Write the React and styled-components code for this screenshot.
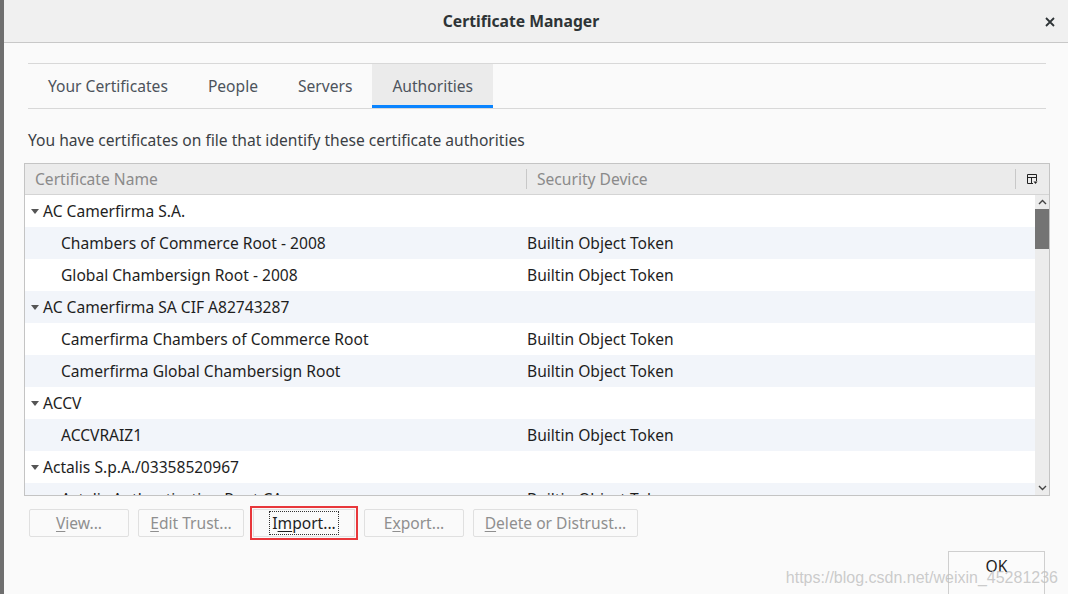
import React from 'react'
import styled, { createGlobalStyle } from 'styled-components';

const Global = createGlobalStyle`
html, body { margin:0; padding:0; height:100%; overflow:hidden; }
body { font-family: "Noto Sans", "Open Sans", sans-serif; }
#root { height:100%; }
`

const Screen = styled.div`
display:flex;
width:1068px;
height:594px;
position:relative;
overflow:hidden;
`

const Strip = styled.div`
width:4px;
flex-shrink:0;
background:#6f6f6f;
`

const Window = styled.div`
flex:1;
display:flex;
flex-direction:column;
background:#fafafa;
overflow:hidden;
`

const TitleBar = styled.div`
height:42px;
flex-shrink:0;
background:#f0f0f0;
border-bottom:1px solid #c8c8c8;
display:flex;
align-items:center;
justify-content:center;
position:relative;
`

const Title = styled.div`
font-size:15.7px;
font-weight:700;
color:#2e3436;
margin-left:-30px;
`

const Close = styled.div`
position:absolute;
right:10px;
top:13px;
width:16px;
height:16px;
`

const Content = styled.div`
display:flex;
flex-direction:column;
flex-shrink:0;
padding:20px 18px 0 20px;
`

const Tabs = styled.div`
display:flex;
margin:0 4px;
height:44px;
border-top:1px solid #d8d8d8;
border-bottom:1px solid #d8d8d8;
`

const Tab = styled.div`
display:flex;
align-items:center;
padding:0 ${p=>p.$pad}px;
font-size:15.6px;
color:#4d535c;
background:${p=>p.$active?'#ebebeb':'transparent'};
box-shadow:${p=>p.$active?'inset 0 -3px 0 #0a84ff':'none'};
`

const Desc = styled.div`
margin:21px 4px 0;
font-size:15.6px;
color:#3b3f45;
height:20px;
line-height:20px;
`

const Tree = styled.div`
margin-top:13px;
height:331px;
border:1px solid #c4c4c4;
display:flex;
flex-direction:column;
background:#fff;
`

const Header = styled.div`
height:30px;
display:flex;
align-items:center;
background:#ebebeb;
border-bottom:1px solid #d4d4d4;
font-size:15.6px;
color:#8a8a8a;
`

const HeadCell = styled.div`
display:flex;
align-items:center;
width:${p=>p.$w}px;
padding-left:${p=>p.$pl}px;
box-sizing:border-box;
border-left:${p=>p.$sep?'1px solid #c8c8c8':'none'};
height:20px;
`

const Body = styled.div`
flex:1;
display:flex;
overflow:hidden;
`

const Rows = styled.div`
flex:1;
overflow:hidden;
`

const Row = styled.div`
height:32px;
display:flex;
align-items:center;
background:${p=>p.$alt?'#f2f5fa':'#fff'};
font-size:15.6px;
color:#1e1e1e;
`

const NameCell = styled.div`
width:502px;
display:flex;
align-items:center;
padding-left:${p=>p.$child?36:6}px;
box-sizing:border-box;
`

const Twisty = styled.span`
display:inline-block;
width:0;
height:0;
border-left:4px solid transparent;
border-right:4px solid transparent;
border-top:5px solid #555;
margin-right:4px;
`

const Scroll = styled.div`
width:14px;
background:#ececec;
display:flex;
flex-direction:column;
align-items:center;
`

const Arrow = styled.div`
height:14px;
display:flex;
align-items:center;
justify-content:center;
`

const Thumb = styled.div`
width:14px;
height:40px;
background:#747474;
`

const ButtonRow = styled.div`
display:flex;
gap:9px;
margin:13px 0 0 5px;
`

const Button = styled.div`
height:28px;
width:${p=>p.$w}px;
box-sizing:border-box;
border:1px solid #e0e0e0;
border-radius:${p=>p.$marked?0:2}px;
display:flex;
align-items:center;
justify-content:center;
font-size:15.6px;
color:${p=>p.$on?'#1e1e1e':'#8f8f8f'};
background:#fafafa;
${p=>p.$marked && `
outline:2px solid #e8373b;
outline-offset:1px;
`}
u { text-decoration-thickness:1px; text-underline-offset:2px; }
`

const Focus = styled.span`
outline:1px dotted #333;
padding:0 2px;
`

const OkRow = styled.div`
display:flex;
justify-content:flex-end;
margin-top:14px;
padding-right:5px;
`

const OkButton = styled.div`
width:97px;
height:50px;
box-sizing:border-box;
border:1px solid #cfcfcf;
border-bottom:none;
display:flex;
justify-content:center;
padding-top:3px;
font-size:15.6px;
color:#1e1e1e;
background:#fbfbfb;
`

const Watermark = styled.div`
position:absolute;
right:10px;
bottom:7px;
font-family:"Liberation Sans", Arial, sans-serif;
font-size:16px;
color:rgba(190,190,190,0.8);
`

const rows = [
  { name:'AC Camerfirma S.A.', parent:true },
  { name:'Chambers of Commerce Root - 2008', dev:'Builtin Object Token' },
  { name:'Global Chambersign Root - 2008', dev:'Builtin Object Token' },
  { name:'AC Camerfirma SA CIF A82743287', parent:true },
  { name:'Camerfirma Chambers of Commerce Root', dev:'Builtin Object Token' },
  { name:'Camerfirma Global Chambersign Root', dev:'Builtin Object Token' },
  { name:'ACCV', parent:true },
  { name:'ACCVRAIZ1', dev:'Builtin Object Token' },
  { name:'Actalis S.p.A./03358520967', parent:true },
  { name:'Actalis Authentication Root CA', dev:'Builtin Object Token' },
]

const App = () => {
  return (
    <Screen>
      <Global />
      <Strip />
      <Window>
        <TitleBar>
          <Title>Certificate Manager</Title>
          <Close>
            <svg width="16" height="16" viewBox="0 0 16 16">
              <path d="M4 4 L12 12 M12 4 L4 12" stroke="#2e3436" strokeWidth="1.8" />
            </svg>
          </Close>
        </TitleBar>
        <Content>
          <Tabs>
            <Tab $pad={20}>Your Certificates</Tab>
            <Tab $pad={20}>People</Tab>
            <Tab $pad={20}>Servers</Tab>
            <Tab $pad={20} $active>Authorities</Tab>
          </Tabs>
          <Desc>You have certificates on file that identify these certificate authorities</Desc>
          <Tree>
            <Header>
              <HeadCell $w={501} $pl={10}>Certificate Name</HeadCell>
              <HeadCell $w={489} $pl={10} $sep>Security Device</HeadCell>
              <HeadCell $w={34} $pl={11} $sep>
                <svg width="11" height="11" viewBox="0 0 11 11">
                  <path d="M0.5 0.5 H9.5 V7 M0.5 0.5 V9.5 H6 M0.5 3.5 H9.5 M4.5 3.5 V9.5" stroke="#222" fill="none" strokeWidth="1" />
                  <path d="M6.5 7.5 H10.5 L8.5 10 Z" fill="#222" />
                </svg>
              </HeadCell>
            </Header>
            <Body>
              <Rows>
                {rows.map((r,i)=>(
                  <Row key={i} $alt={i%2===1}>
                    <NameCell $child={!r.parent}>
                      {r.parent && <Twisty />}
                      {r.name}
                    </NameCell>
                    <div>{r.dev}</div>
                  </Row>
                ))}
              </Rows>
              <Scroll>
                <Arrow>
                  <svg width="9" height="6" viewBox="0 0 9 6"><path d="M1 5 L4.5 1.5 L8 5" stroke="#444" strokeWidth="1.4" fill="none" /></svg>
                </Arrow>
                <Thumb />
                <div style={{flex:1}} />
                <Arrow>
                  <svg width="9" height="6" viewBox="0 0 9 6"><path d="M1 1 L4.5 4.5 L8 1" stroke="#444" strokeWidth="1.4" fill="none" /></svg>
                </Arrow>
              </Scroll>
            </Body>
          </Tree>
          <ButtonRow>
            <Button $w={100}><span><u>V</u>iew...</span></Button>
            <Button $w={106}><span><u>E</u>dit Trust...</span></Button>
            <Button $w={102} $on $marked><Focus>I<u>m</u>port...</Focus></Button>
            <Button $w={100}><span>E<u>x</u>port...</span></Button>
            <Button $w={165}><span><u>D</u>elete or Distrust...</span></Button>
          </ButtonRow>
          <OkRow>
            <OkButton>OK</OkButton>
          </OkRow>
        </Content>
      </Window>
      <Watermark>https://blog.csdn.net/weixin_45281236</Watermark>
    </Screen>
  )
}

export default App;
